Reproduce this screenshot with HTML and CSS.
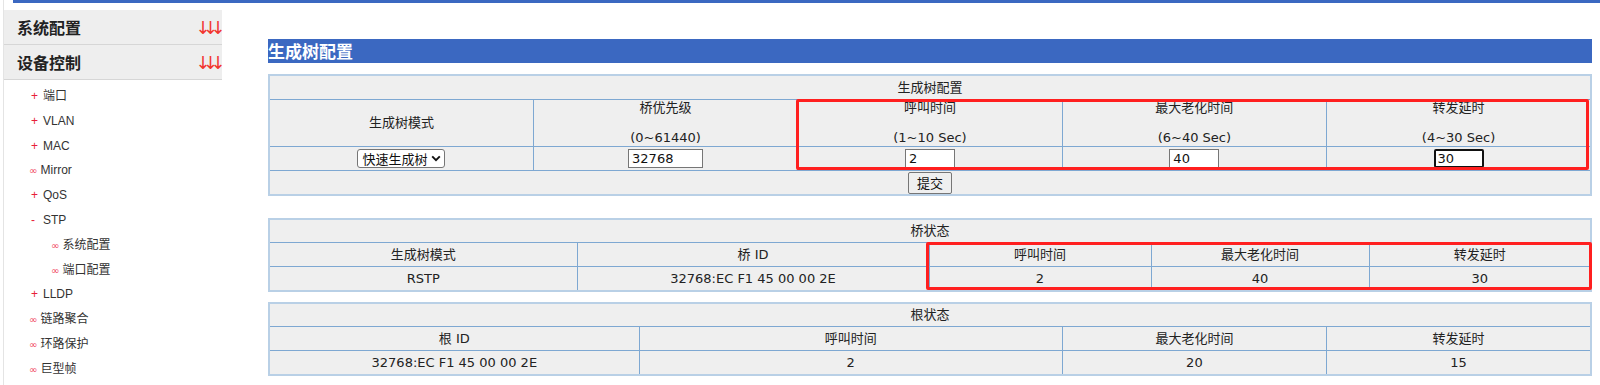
FILE: index.html
```html
<!DOCTYPE html>
<html lang="zh-CN">
<head>
    <meta charset="UTF-8">
    <meta name="viewport" content="width=device-width, initial-scale=1.0">
    <title>生成树配置</title>
    <link rel="stylesheet" href="styles.css">
</head>
<body>
<div class="page">
    <div class="topbar"></div>
    <div class="layout">
        <aside class="sidebar">
            <div class="menu-head">系统配置<span class="arrows">↓↓↓</span></div>
            <div class="menu-head">设备控制<span class="arrows">↓↓↓</span></div>
            <ul class="menu">
                <li class="item"><span class="sign">+</span>端口</li>
                <li class="item"><span class="sign">+</span>VLAN</li>
                <li class="item"><span class="sign">+</span>MAC</li>
                <li class="item leaf"><span class="sign">∞</span>Mirror</li>
                <li class="item"><span class="sign">+</span>QoS</li>
                <li class="item"><span class="sign">-</span>STP</li>
                <li class="item sub"><span class="sign">∞</span>系统配置</li>
                <li class="item sub"><span class="sign">∞</span>端口配置</li>
                <li class="item"><span class="sign">+</span>LLDP</li>
                <li class="item leaf"><span class="sign">∞</span>链路聚合</li>
                <li class="item leaf"><span class="sign">∞</span>环路保护</li>
                <li class="item leaf"><span class="sign">∞</span>巨型帧</li>
            </ul>
        </aside>

        <main class="content">
            <h2 class="title">生成树配置</h2>

            <!-- 生成树配置 -->
            <div class="panel">
                <table class="grid">
                    <tr><td colspan="5">生成树配置</td></tr>
                    <tr class="tall">
                        <td>生成树模式</td>
                        <td>桥优先级<br><br>(0~61440)</td>
                        <td>呼叫时间<br><br>(1~10 Sec)</td>
                        <td>最大老化时间<br><br>(6~40 Sec)</td>
                        <td>转发延时<br><br>(4~30 Sec)</td>
                    </tr>
                    <tr>
                        <td>
                            <label class="select-box">
                                <select id="stpMode">
                                    <option value="rstp">快速生成树</option>
                                    <option value="stp">生成树</option>
                                </select>
                                <svg width="10" height="7" viewBox="0 0 10 7"><path d="M1.2 1.3 L5 5.2 L8.8 1.3" fill="none" stroke="#111" stroke-width="1.9"/></svg>
                            </label>
                        </td>
                        <td><input type="text" class="field wide" id="priority" value="32768"></td>
                        <td><input type="text" class="field" id="hello" value="2"></td>
                        <td><input type="text" class="field" id="maxAge" value="40"></td>
                        <td><input type="text" class="field active" id="fwdDelay" value="30" autofocus onfocus="this.setSelectionRange(2, 2)"></td>
                    </tr>
                    <tr><td colspan="5"><button class="submit">提交</button></td></tr>
                </table>
                <div class="mark mark-config"></div>
            </div>

            <!-- 桥状态 -->
            <div class="panel gap-big">
                <table class="grid">
                    <colgroup>
                        <col class="b1"><col class="b2"><col class="b3"><col class="b4"><col class="b5">
                    </colgroup>
                    <tr><td colspan="5">桥状态</td></tr>
                    <tr>
                        <td>生成树模式</td>
                        <td>桥 ID</td>
                        <td>呼叫时间</td>
                        <td>最大老化时间</td>
                        <td>转发延时</td>
                    </tr>
                    <tr>
                        <td>RSTP</td>
                        <td>32768:EC F1 45 00 00 2E</td>
                        <td>2</td>
                        <td>40</td>
                        <td>30</td>
                    </tr>
                </table>
                <div class="mark mark-bridge"></div>
            </div>

            <!-- 根状态 -->
            <div class="panel gap-small">
                <table class="grid">
                    <colgroup>
                        <col class="r1"><col class="r2"><col class="r3"><col class="r4">
                    </colgroup>
                    <tr><td colspan="4">根状态</td></tr>
                    <tr>
                        <td>根 ID</td>
                        <td>呼叫时间</td>
                        <td>最大老化时间</td>
                        <td>转发延时</td>
                    </tr>
                    <tr>
                        <td>32768:EC F1 45 00 00 2E</td>
                        <td>2</td>
                        <td>20</td>
                        <td>15</td>
                    </tr>
                </table>
            </div>
        </main>
    </div>
</div>
</body>
</html>
```

FILE: styles.css
```css
body {
    margin: 0;
    background: #fff;
    font-family: "Liberation Sans", "Noto Sans CJK SC", sans-serif;
    color: #333;
}

.page {
    margin-left: 3px;
    border-left: 1px solid #e4e4e4;
    min-height: 100vh;
}

.topbar {
    height: 3px;
    margin-left: 9px;
    background-color: #3b68c1;
}

.layout {
    display: flex;
}

/* left menu */
.sidebar {
    width: 218px;
    flex-shrink: 0;
    padding-top: 7px;
}

.menu-head {
    height: 35px;
    box-sizing: border-box;
    display: flex;
    align-items: center;
    justify-content: space-between;
    padding: 0 4px 0 13px;
    background-color: #eeeeee;
    border-bottom: 1px solid #d6d6d6;
    font-family: "Noto Sans CJK SC", sans-serif;
    font-size: 16px;
    font-weight: bold;
    color: #222;
}

.arrows {
    font-family: "DejaVu Sans", sans-serif;
    font-size: 18px;
    font-weight: normal;
    letter-spacing: -7.6px;
    color: #f2362f;
}

.menu {
    list-style: none;
    margin: 0;
    padding: 4px 0 0 0;
}

.item {
    height: 24.8px;
    line-height: 24.8px;
    padding-left: 27px;
    font-size: 12px;
    color: #333;
}

.item .sign {
    display: inline-block;
    width: 12px;
    color: #e8203a;
}

.item.leaf {
    padding-left: 25px;
}

.item.sub {
    padding-left: 47px;
}

.item.leaf .sign, .item.sub .sign {
    width: 11.5px;
    font-family: "DejaVu Sans", sans-serif;
    font-size: 10px;
    color: #f0405a;
}

/* right content */
.content {
    flex: 1;
    padding: 36px 10px 0 46px;
}

.title {
    margin: 0;
    height: 24px;
    line-height: 24px;
    background-color: #3b68c1;
    color: #fff;
    font-family: "Noto Sans CJK SC", sans-serif;
    font-size: 17px;
    font-weight: bold;
}

.panel {
    position: relative;
    margin-top: 11px;
}

.panel.gap-big {
    margin-top: 22px;
}

.panel.gap-small {
    margin-top: 10px;
}

.grid {
    width: 100%;
    border-collapse: collapse;
    table-layout: fixed;
    border: 2px solid #b9d0e6;
    background-color: #efefef;
    font-family: "DejaVu Sans", "Noto Sans CJK SC", sans-serif;
    font-size: 13px;
    line-height: 15px;
    color: #222;
}

.grid tr {
    height: 24px;
}

.grid tr.tall {
    height: 47px;
}

.grid td {
    border: 1px solid #7ea8d2;
    text-align: center;
    padding: 0 2px;
}

.b1 { width: 308px; }
.b2 { width: 352px; }
.b3 { width: 222px; }
.b4 { width: 218px; }
.b5 { width: 222px; }

.r1 { width: 28%; }
.r2 { width: 32%; }
.r3 { width: 20%; }
.r4 { width: 20%; }

.select-box {
    display: inline-flex;
    align-items: center;
    gap: 3px;
    height: 19px;
    box-sizing: border-box;
    padding: 0 3px 0 4px;
    background: #fff;
    border: 1px solid #767676;
    border-radius: 3px;
    vertical-align: middle;
}

.select-box select {
    appearance: none;
    -webkit-appearance: none;
    border: none;
    background: transparent;
    padding: 0;
    margin: 0;
    font-family: "Noto Sans CJK SC", sans-serif;
    font-size: 13px;
    color: #111;
    outline: none;
}

.field {
    width: 50px;
    height: 19px;
    box-sizing: border-box;
    padding: 1px 3px;
    margin: 0;
    border: 1px solid #767676;
    font-family: "DejaVu Sans", sans-serif;
    font-size: 13px;
    color: #111;
    vertical-align: middle;
}

.field.wide {
    width: 75px;
}

.field.active {
    border: 2px solid #111;
    border-radius: 2px;
    padding: 0 2px;
}

.field:focus {
    outline: none;
}

.submit {
    height: 22px;
    padding: 0 8px;
    margin: 1px 0 0;
    background-color: #efefef;
    border: 1px solid #767676;
    border-radius: 2px;
    font-family: "Noto Sans CJK SC", sans-serif;
    font-size: 13px;
    color: #111;
    vertical-align: middle;
}

/* red highlight frames drawn over the tables */
.mark {
    position: absolute;
    box-sizing: border-box;
    border: 3px solid #ff1f1f;
    border-radius: 2px;
    pointer-events: none;
}

.mark-config {
    left: 528px;
    top: 25px;
    width: 793px;
    height: 71px;
}

.mark-bridge {
    left: 658px;
    top: 24px;
    width: 666px;
    height: 48px;
}
```
